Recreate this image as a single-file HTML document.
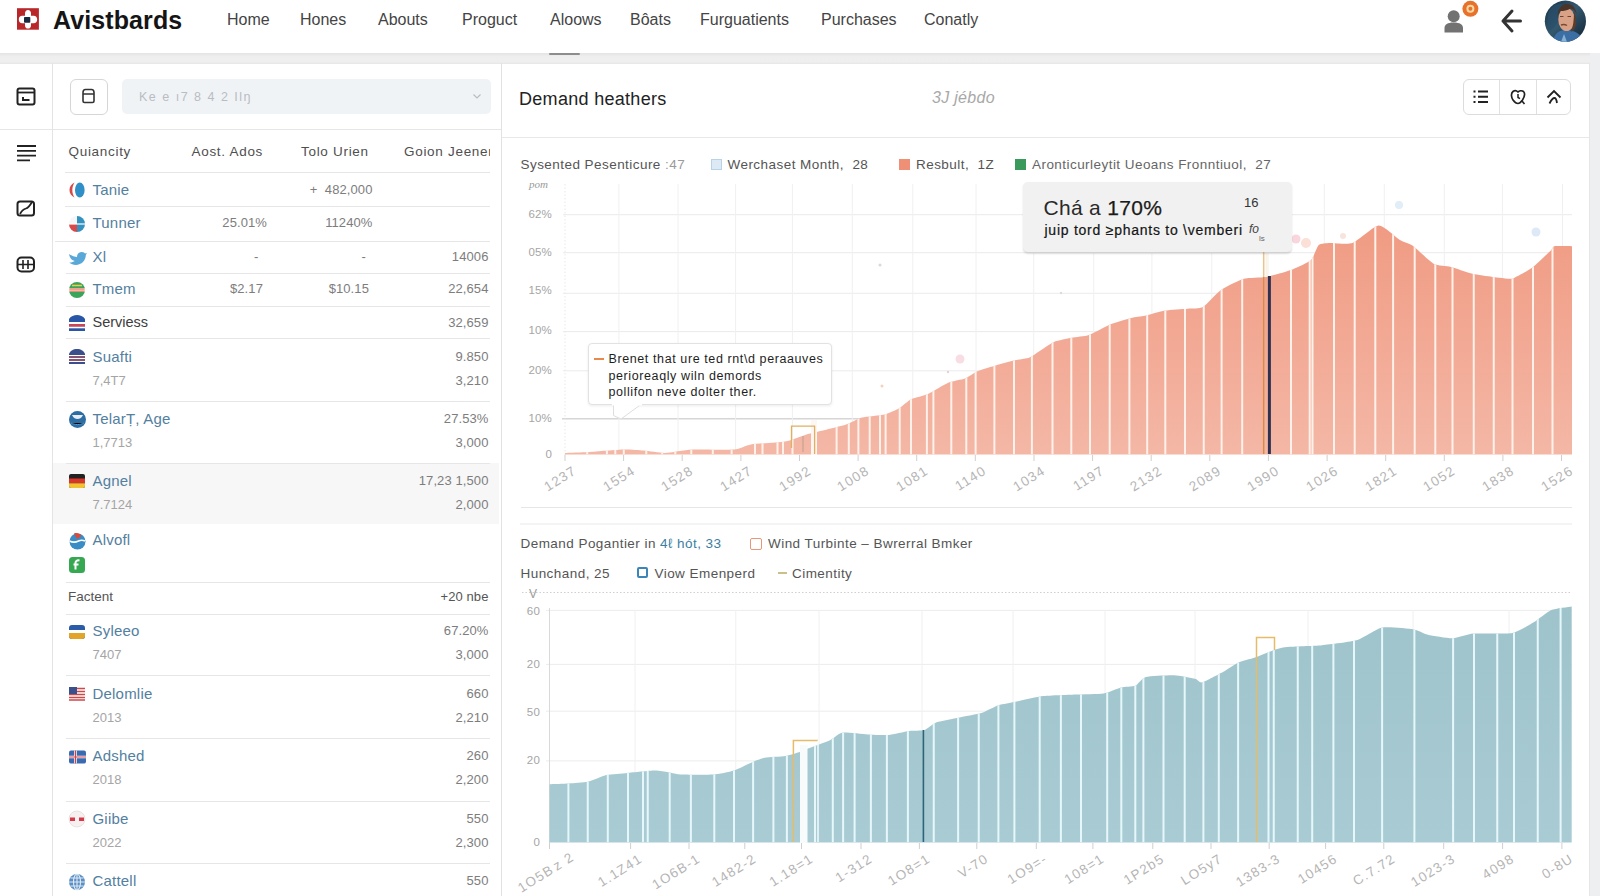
<!DOCTYPE html>
<html><head><meta charset="utf-8">
<style>
*{margin:0;padding:0;box-sizing:border-box}
div{white-space:nowrap}
html,body{width:1600px;height:896px;overflow:hidden;background:#fff;font-family:"Liberation Sans", sans-serif}
.a{position:absolute;white-space:nowrap}
.nav{position:absolute;top:10.5px;font-size:16px;color:#444;letter-spacing:0px}
.th{position:absolute;font-size:13.5px;color:#4f4f4f;letter-spacing:0.7px}
.nm{position:absolute;font-size:15px;color:#5380a0;letter-spacing:0.2px}
.nmd{position:absolute;font-size:14.5px;color:#3d3d3d}
.num{position:absolute;font-size:13px;color:#7d7d7d;text-align:right;width:90px;letter-spacing:0.1px}
.sub{position:absolute;font-size:13px;color:#a5a5a5}
.hl{position:absolute;height:1px;background:#e6e6e6}
.yl{position:absolute;font-size:11.5px;color:#a5a5a5;text-align:right;width:40px;letter-spacing:0.2px}
.xl{position:absolute;white-space:nowrap;font-size:13.5px;color:#b5b5b5;width:60px;text-align:right;transform:rotate(-32deg);transform-origin:100% 0;letter-spacing:1.2px}
.leg{position:absolute;font-size:13.5px;color:#555;letter-spacing:0.45px}
</style></head><body>
<!-- header -->
<div class="a" style="left:0;top:0;width:1600px;height:53px;background:#fff"></div>
<div class="a" style="left:0;top:53px;width:1600px;height:11px;background:linear-gradient(#e3e3e3,#eeeeee 30%,#efefef 80%,#e6e6e6)"></div>
<div class="a" style="left:549px;top:53.3px;width:31px;height:2px;background:#8d8d8d;border-radius:1px"></div>
<svg class="a" style="left:16px;top:7px" width="24" height="24" viewBox="16 7 24 24">
 <rect x="17" y="8.2" width="21.9" height="21.5" fill="#b9272b"/>
 <path d="M28 10c1.8 0 3 1.3 3 3.2v2.6h2.6c2.2 0 3.6 1.5 3.6 3.6s-1.4 3.8-3.6 3.8H31v2.2c0 1.9-1.2 3.2-3 3.2s-3-1.3-3-3.2v-2.2h-2.8c-2.1 0-3.4-1.6-3.4-3.8s1.3-3.6 3.4-3.6H25v-2.6c0-1.9 1.2-3.2 3-3.2z" fill="#fff"/>
 <rect x="24" y="17" width="6.3" height="5.8" rx="0.8" fill="#1b2a40"/>
</svg>
<div class="a" style="left:53px;top:6px;font-size:25px;font-weight:bold;color:#151515;letter-spacing:0.1px">Avistbards</div>
<div class="nav" style="left:227px">Home</div>
<div class="nav" style="left:300px">Hones</div>
<div class="nav" style="left:378px">Abouts</div>
<div class="nav" style="left:462px">Proguct</div>
<div class="nav" style="left:550px">Aloows</div>
<div class="nav" style="left:630px">Bôats</div>
<div class="nav" style="left:700px">Furguatients</div>
<div class="nav" style="left:821px">Purchases</div>
<div class="nav" style="left:924px">Conatly</div>
<svg class="a" style="left:1440px;top:0" width="40" height="36" viewBox="0 0 40 36">
 <circle cx="13.7" cy="16.3" r="6" fill="#727272"/>
 <path d="M4.5 32.6v-4.5c0-3.5 3-5.6 9.2-5.6s9.3 2.1 9.3 5.6v4.5z" fill="#727272"/>
 <circle cx="30.4" cy="8.8" r="8" fill="#e8712b"/>
 <circle cx="30.4" cy="8.8" r="3" fill="none" stroke="#f8d9a0" stroke-width="2"/>
</svg>
<svg class="a" style="left:1498px;top:8px" width="26" height="26" viewBox="0 0 26 26">
 <path d="M14 3 L5 13 L14 23 M5 13 H22.5" fill="none" stroke="#333" stroke-width="3" stroke-linecap="round" stroke-linejoin="round"/>
</svg>
<svg class="a" style="left:1540px;top:0" width="52" height="46" viewBox="1540 0 52 46">
 <defs><linearGradient id="avbg" x1="0" y1="0" x2="1" y2="1"><stop offset="0" stop-color="#162c40"/><stop offset="0.45" stop-color="#34596f"/><stop offset="1" stop-color="#0e1c2c"/></linearGradient>
 <clipPath id="avc"><circle cx="1565.4" cy="21.2" r="20.6"/></clipPath></defs>
 <g clip-path="url(#avc)">
 <rect x="1544" y="0" width="44" height="44" fill="url(#avbg)"/>
 <path d="M1548 14c2-6 6-10 12-10s4 8 0 14-8 14-12 12z" fill="#2a506c" opacity="0.7"/>
 <path d="M1552 44c2-10 6-14 14-14s16 4 20 14z" fill="#3b6fa3"/>
 <path d="M1561 42l3-8 3 8z" fill="#86b2d8"/>
 <ellipse cx="1566.5" cy="19.5" rx="8.2" ry="11.5" fill="#d9a185"/>
 <path d="M1557.5 17c0-8 4-13 9.5-13s9 4 9.5 10c-1-3-3.5-5-6-5.5-3 2-7 2.5-10 2.5-1.5 1.5-2.5 3.5-3 6z" fill="#4b3428"/>
 <path d="M1574 12c2 3 2.5 8 2 13-1 4-3 6-5 7 2-5 3-12 3-20z" fill="#5a3d2c"/>
 <path d="M1561 25c2-.8 4-.8 6 .5" stroke="#7a4a35" stroke-width="1.4" fill="none"/>
 <path d="M1560 16.5h3.5M1567.5 16.5h3.5" stroke="#6a4535" stroke-width="1"/>
 </g>
</svg>

<!-- sidebar -->
<div class="a" style="left:52px;top:63px;width:1px;height:833px;background:#e4e4e4"></div>
<div class="hl" style="left:0;top:129px;width:52px"></div>
<svg class="a" style="left:16px;top:87px" width="20" height="19" viewBox="0 0 20 19">
 <rect x="1.5" y="1.5" width="17" height="16" rx="2" fill="none" stroke="#222" stroke-width="2"/>
 <line x1="1.5" y1="5.5" x2="18.5" y2="5.5" stroke="#222" stroke-width="1.8"/>
 <path d="M7 10v3h6.5" fill="none" stroke="#222" stroke-width="2"/>
</svg>
<svg class="a" style="left:16px;top:144px" width="21" height="18" viewBox="0 0 21 18">
 <path d="M1 2h19M1 6.8h19M1 11.6h19M1 16.4h13" stroke="#222" stroke-width="1.8"/>
</svg>
<svg class="a" style="left:16px;top:200px" width="20" height="17" viewBox="0 0 20 17">
 <rect x="1.5" y="1.5" width="16.5" height="14" rx="2.5" fill="none" stroke="#222" stroke-width="2"/>
 <path d="M4 14c2-4 4-5 6-5.5s4-3 6-6.5" fill="none" stroke="#222" stroke-width="1.8"/>
</svg>
<svg class="a" style="left:16px;top:256px" width="20" height="17" viewBox="0 0 20 17">
 <rect x="1.5" y="1.5" width="16.5" height="14" rx="4" fill="none" stroke="#222" stroke-width="2"/>
 <path d="M1.5 8.5h16.5M7 4v9M12 4v9" stroke="#222" stroke-width="1.6"/>
</svg>

<!-- left panel -->
<div class="a" style="left:70px;top:78.5px;width:37.5px;height:36px;border:1px solid #d6d6d6;border-radius:6px;background:#fff"></div>
<svg class="a" style="left:80px;top:87px" width="17" height="17" viewBox="0 0 17 17">
 <path d="M3 5.5c0-2 1-3 2.5-3h6c1.5 0 2.5 1 2.5 3v8.5c0 1-.5 1.5-1.5 1.5h-8c-1 0-1.5-.5-1.5-1.5z M3 7h11" fill="none" stroke="#333" stroke-width="1.6"/>
</svg>
<div class="a" style="left:122px;top:79px;width:369px;height:35px;background:#f0f3f6;border-radius:5px"></div>
<div class="a" style="left:139px;top:90px;font-size:12.5px;color:#b9bcc2;letter-spacing:1.5px">Ke e  ı7  8  4   2 Ilŋ</div>
<svg class="a" style="left:472px;top:93px" width="10" height="7" viewBox="0 0 10 7"><path d="M1.5 1.5l3.5 3.5 3.5-3.5" fill="none" stroke="#b8bcc2" stroke-width="1.2"/></svg>
<div class="hl" style="left:53px;top:129px;width:448px"></div>

<div class="th" style="left:68.5px;top:144px">Quiancity</div>
<div class="th" style="left:191.5px;top:144px">Aost. Ados</div>
<div class="th" style="left:301px;top:144px">Tolo Urien</div>
<div class="th" style="left:404px;top:144px;width:86px;overflow:hidden">Goion Jeener</div>
<div class="hl" style="left:65px;top:172px;width:425px"></div>

<div class="a" style="left:53px;top:463px;width:446px;height:61px;background:#f7f7f7"></div>
<svg class="a" style="left:68px;top:181.0px" width="18" height="18" viewBox="0 0 18 18"><path d="M6.5 1.5C3 3 1.5 6 1.5 9s1.5 6 5 7.5C5 14 4.3 11.5 4.3 9S5 4 6.5 1.5z" fill="#d84a4a"/><ellipse cx="11.8" cy="9" rx="4.8" ry="7.6" fill="#2f8fc6"/></svg>
<div class="nm" style="left:92.5px;top:180.5px">Tanie</div>
<div class="num" style="left:282.5px;top:181.5px">+ &nbsp;482,000</div>
<svg class="a" style="left:68px;top:214.5px" width="18" height="18" viewBox="0 0 18 18"><circle cx="9" cy="9" r="8" fill="#f6f6f6"/><path d="M9 1a8 8 0 0 1 0 16z" fill="#3592bf"/><path d="M1 9a8 8 0 0 0 8 8V9z" fill="#d84848"/><path d="M1 9h16" stroke="#fff" stroke-width="1.2"/></svg>
<div class="nm" style="left:92.5px;top:214px">Tunner</div>
<div class="num" style="left:177px;top:215px">25.01%</div>
<div class="num" style="left:282.5px;top:215px">11240%</div>
<svg class="a" style="left:68px;top:248.5px" width="19" height="18" viewBox="0 0 19 18"><path d="M1 5c3 2 6 3 8 3 0-3 2-5 5-5 1.5 0 2.5.8 3 1.5l2-.5-1.2 2c.2 5-4 10-10 10-2.5 0-5-1-6.5-2.5 2 .2 4-.5 5.5-1.5C3 11 1.5 8 1 5z" fill="#5aa8d8"/></svg>
<div class="nm" style="left:92.5px;top:248px">Xl</div>
<div class="num" style="left:168.5px;top:249px">-</div>
<div class="num" style="left:276px;top:249px">-</div>
<div class="num" style="left:398.5px;top:249px">14006</div>
<svg class="a" style="left:68px;top:280.5px" width="18" height="18" viewBox="0 0 18 18"><circle cx="9" cy="9" r="8" fill="#3aa55a"/><rect x="1" y="7" width="16" height="4" fill="#f4e6c8"/><path d="M1.5 8h15M1.5 10.2h15" stroke="#d9534f" stroke-width="0.9"/><path d="M4 4.5h10" stroke="#f2c94c" stroke-width="1.5"/></svg>
<div class="nm" style="left:92.5px;top:280px">Tmem</div>
<div class="num" style="left:173px;top:281px">$2.17</div>
<div class="num" style="left:279px;top:281px">$10.15</div>
<div class="num" style="left:398.5px;top:281px">22,654</div>
<svg class="a" style="left:68px;top:314.0px" width="18" height="18" viewBox="0 0 18 18"><path d="M1 5c2-3 5-4 8-4s6 1 8 4v12H1z" fill="#2a56a8"/><rect x="1" y="8" width="16" height="2.2" fill="#fff"/><rect x="1" y="10.2" width="16" height="2.5" fill="#d8404e"/><rect x="1" y="12.7" width="16" height="1.6" fill="#fff"/></svg>
<div class="nmd" style="left:92.5px;top:313.5px">Serviess</div>
<div class="num" style="left:398.5px;top:314.5px">32,659</div>
<div class="hl" style="left:65px;top:206px;width:425px"></div>
<div class="hl" style="left:55px;top:241px;width:435px"></div>
<div class="hl" style="left:66px;top:273px;width:424px"></div>
<div class="hl" style="left:66px;top:305.5px;width:424px"></div>
<div class="hl" style="left:66px;top:338px;width:424px"></div>
<svg class="a" style="left:68px;top:348.0px" width="18" height="18" viewBox="0 0 18 18"><path d="M1 6c1-3 4-5 8-5s7 2 8 5v10H1z" fill="#3c4f8a"/><path d="M1 7.5h16M1 10.5h16M1 13.5h16" stroke="#fff" stroke-width="1.2"/><path d="M1 9h16M1 12h16" stroke="#d35a5a" stroke-width="1"/></svg>
<div class="nm" style="left:92.5px;top:347.5px">Suafti</div>
<div class="sub" style="left:92.5px;top:372.5px">7,4T7</div>
<div class="num" style="left:398.5px;top:348.5px">9.850</div>
<div class="num" style="left:398.5px;top:372.5px">3,210</div>
<svg class="a" style="left:68px;top:410.0px" width="19" height="18" viewBox="0 0 19 18"><circle cx="9.5" cy="9.5" r="8.5" fill="#2c6da3"/><path d="M4 5c1.5 3 3.5 4 5.5 4s4-1 5.5-4" fill="#e8eef4"/><path d="M3 13c2 1 4 1.5 6.5 1.5s4.5-.5 6.5-1.5" stroke="#5a9ad0" stroke-width="1"/></svg>
<div class="nm" style="left:92.5px;top:409.5px">Telar&#7788;, Age</div>
<div class="sub" style="left:92.5px;top:434.5px">1,7713</div>
<div class="num" style="left:398.5px;top:410.5px">27.53%</div>
<div class="num" style="left:398.5px;top:434.5px">3,000</div>
<svg class="a" style="left:68px;top:472.0px" width="18" height="18" viewBox="0 0 18 18"><rect x="1" y="2" width="16" height="14" rx="2" fill="#222"/><rect x="1" y="6.5" width="16" height="4.7" fill="#d8342a"/><path d="M1 11.2h16v2.8c0 1.1-.9 2-2 2H3c-1.1 0-2-.9-2-2z" fill="#f2c230"/></svg>
<div class="nm" style="left:92.5px;top:471.5px">Agnel</div>
<div class="sub" style="left:92.5px;top:496.5px">7.7124</div>
<div class="num" style="left:398.5px;top:472.5px">17,23 1,500</div>
<div class="num" style="left:398.5px;top:496.5px">2,000</div>
<svg class="a" style="left:68px;top:531.5px" width="18" height="18" viewBox="0 0 18 18"><circle cx="9.5" cy="9.5" r="8" fill="#3a8cc4"/><path d="M6 1.5c3-1 6 0 7.5 2.5L9 7z" fill="#d94a3a"/><path d="M1.5 9c3 1.5 6 1.5 9 0s4.5-1 6.5 0" stroke="#fff" stroke-width="1.6" fill="none"/></svg>
<div class="nm" style="left:92.5px;top:531px">Alvofl</div>
<svg class="a" style="left:68px;top:556.0px" width="18" height="18" viewBox="0 0 18 18"><rect x="1" y="1" width="16" height="16" rx="3.5" fill="#36a852"/><path d="M11.5 4.5c-2.5-.5-4 .5-4 2.5v6.5M5.5 8.5h5" stroke="#fff" stroke-width="2" fill="none"/></svg>
<div class="hl" style="left:66px;top:400.5px;width:424px"></div>
<div class="hl" style="left:66px;top:462.5px;width:424px"></div>
<div class="hl" style="left:66px;top:582px;width:424px"></div>
<div class="a" style="left:68px;top:589px;font-size:13.5px;color:#555">Factent</div>
<div class="num" style="left:398.5px;top:589px;color:#555">+20 nbe</div>
<div class="hl" style="left:66px;top:613.5px;width:424px"></div>
<svg class="a" style="left:68px;top:622.5px" width="18" height="18" viewBox="0 0 18 18"><rect x="1" y="2" width="16" height="14" rx="3" fill="#2a5caa"/><rect x="1" y="7" width="16" height="3" fill="#fff"/><path d="M1 10h16v3c0 1.7-1.3 3-3 3H4c-1.7 0-3-1.3-3-3z" fill="#e3a42a"/></svg>
<div class="nm" style="left:92.5px;top:622px">Syleeo</div>
<div class="sub" style="left:92.5px;top:647px">7407</div>
<div class="num" style="left:398.5px;top:623px">67.20%</div>
<div class="num" style="left:398.5px;top:647px">3,000</div>
<svg class="a" style="left:68px;top:685.0px" width="18" height="18" viewBox="0 0 18 18"><rect x="1" y="2" width="16" height="14" rx="2" fill="#fff"/><path d="M1 3.5h16M1 6.5h16M1 9.5h16M1 12.5h16M1 15h16" stroke="#d04848" stroke-width="1.4"/><rect x="1" y="2" width="8" height="7" fill="#3a4f8c"/></svg>
<div class="nm" style="left:92.5px;top:684.5px">Delomlie</div>
<div class="sub" style="left:92.5px;top:709.5px">2013</div>
<div class="num" style="left:398.5px;top:685.5px">660</div>
<div class="num" style="left:398.5px;top:709.5px">2,210</div>
<svg class="a" style="left:68px;top:747.5px" width="19" height="18" viewBox="0 0 19 18"><rect x="1" y="2.5" width="17" height="13" rx="2" fill="#3b6ab0"/><path d="M1 9h17M7.5 2.5v13" stroke="#fff" stroke-width="2.6"/><path d="M1 9h17M7.5 2.5v13" stroke="#d44040" stroke-width="1.2"/></svg>
<div class="nm" style="left:92.5px;top:747px">Adshed</div>
<div class="sub" style="left:92.5px;top:772px">2018</div>
<div class="num" style="left:398.5px;top:748px">260</div>
<div class="num" style="left:398.5px;top:772px">2,200</div>
<svg class="a" style="left:68px;top:810.0px" width="18" height="18" viewBox="0 0 18 18"><circle cx="9" cy="9" r="8" fill="#f6f0f0" stroke="#e6dada" stroke-width="0.8"/><rect x="2" y="7.5" width="5" height="3.5" fill="#d63a48"/><rect x="11" y="7.5" width="5" height="3.5" fill="#d63a48"/></svg>
<div class="nm" style="left:92.5px;top:809.5px">Giibe</div>
<div class="sub" style="left:92.5px;top:834.5px">2022</div>
<div class="num" style="left:398.5px;top:810.5px">550</div>
<div class="num" style="left:398.5px;top:834.5px">2,300</div>
<svg class="a" style="left:68px;top:872.5px" width="18" height="18" viewBox="0 0 18 18"><circle cx="9" cy="9" r="8" fill="#5b8fc4"/><path d="M1 9h16M9 1v16M2.5 5h13M2.5 13h13" stroke="#dfeaf5" stroke-width="1.1"/><ellipse cx="9" cy="9" rx="3.5" ry="8" fill="none" stroke="#dfeaf5" stroke-width="1.1"/></svg>
<div class="nm" style="left:92.5px;top:872px">Cattell</div>
<div class="num" style="left:398.5px;top:873px">550</div>
<div class="hl" style="left:66px;top:675px;width:424px"></div>
<div class="hl" style="left:66px;top:738px;width:424px"></div>
<div class="hl" style="left:66px;top:800.5px;width:424px"></div>
<div class="hl" style="left:66px;top:863px;width:424px"></div>

<!-- right panel -->
<div class="a" style="left:501px;top:63px;width:1px;height:833px;background:#e2e2e2"></div>
<div class="a" style="left:1590px;top:53px;width:10px;height:843px;background:#eeeff1"></div>
<div class="a" style="left:1589px;top:63px;width:1px;height:833px;background:#e6e6e6"></div>
<div class="a" style="left:519px;top:89px;font-size:18px;color:#222;letter-spacing:0.3px">Demand heathers</div>
<div class="a" style="left:932px;top:89px;font-size:16px;color:#a8a8a8;font-style:italic;letter-spacing:0.3px">3J jébdo</div>
<div class="a" style="left:1462.5px;top:79px;width:108.5px;height:36px;border:1px solid #dcdcdc;border-radius:6px"></div>
<div class="a" style="left:1498.5px;top:80px;width:1px;height:34px;background:#e0e0e0"></div>
<div class="a" style="left:1535.5px;top:80px;width:1px;height:34px;background:#e0e0e0"></div>
<svg class="a" style="left:1472px;top:89px" width="18" height="16" viewBox="0 0 18 16">
 <path d="M1.5 2.5h2M1.5 7.8h2M1.5 13h2M6 2.5h10M6 7.8h10M6 13h10" stroke="#222" stroke-width="2"/>
</svg>
<svg class="a" style="left:1509px;top:89px" width="18" height="16" viewBox="0 0 18 16">
 <path d="M4 2.5c2-1.5 4-.5 5 .5 1-1 3.5-2 5.5-.5 2 2 .5 6-1 8.5-1.5 2-3.5 3.5-4.5 3.5s-3.5-1.5-5-3.5C2.5 9 1.5 4.5 4 2.5z" fill="none" stroke="#222" stroke-width="1.7"/>
 <path d="M9 5v3.5l2 1.2" fill="none" stroke="#222" stroke-width="1.5"/>
 <path d="M13 12l2.5 3" stroke="#222" stroke-width="1.6"/>
</svg>
<svg class="a" style="left:1545px;top:88px" width="18" height="18" viewBox="0 0 18 18">
 <path d="M2.5 9.5l6.5-6.5 6.5 6.5" fill="none" stroke="#222" stroke-width="1.8"/>
 <path d="M4.5 15.5c1.5-3 3-5.5 5-5.5 1.5 0 2 1.5 2.5 5" fill="none" stroke="#222" stroke-width="1.8"/>
</svg>
<div class="hl" style="left:502px;top:137px;width:1087px;background:#e8e8e8"></div>

<svg width="1600" height="896" style="position:absolute;left:0;top:0">
<defs><linearGradient id="g1" x1="0" y1="0" x2="0" y2="1"><stop offset="0" stop-color="#f09b83"/><stop offset="1" stop-color="#f4b7a6"/></linearGradient><linearGradient id="g2" x1="0" y1="0" x2="0" y2="1"><stop offset="0" stop-color="#9fc3ca"/><stop offset="1" stop-color="#a9ccd4"/></linearGradient></defs>
<line x1="563" y1="214.7" x2="1572" y2="214.7" stroke="#ebebeb" stroke-width="1"/>
<line x1="563" y1="252.7" x2="1572" y2="252.7" stroke="#ebebeb" stroke-width="1"/>
<line x1="563" y1="293.3" x2="1572" y2="293.3" stroke="#ebebeb" stroke-width="1"/>
<line x1="563" y1="331.6" x2="1572" y2="331.6" stroke="#ebebeb" stroke-width="1"/>
<line x1="563" y1="370.8" x2="1572" y2="370.8" stroke="#ebebeb" stroke-width="1"/>
<line x1="562" y1="418.7" x2="1572" y2="418.7" stroke="#d6d6d6" stroke-width="1.4"/>
<line x1="618.9" y1="184" x2="618.9" y2="454" stroke="#f0f0f0" stroke-width="1"/>
<line x1="678.0" y1="184" x2="678.0" y2="454" stroke="#f0f0f0" stroke-width="1"/>
<line x1="735.6" y1="184" x2="735.6" y2="454" stroke="#f0f0f0" stroke-width="1"/>
<line x1="792.4" y1="184" x2="792.4" y2="454" stroke="#f0f0f0" stroke-width="1"/>
<line x1="852.3" y1="184" x2="852.3" y2="454" stroke="#f0f0f0" stroke-width="1"/>
<line x1="912.8" y1="184" x2="912.8" y2="454" stroke="#f0f0f0" stroke-width="1"/>
<line x1="976.0" y1="184" x2="976.0" y2="454" stroke="#f0f0f0" stroke-width="1"/>
<line x1="1033.7" y1="184" x2="1033.7" y2="454" stroke="#f0f0f0" stroke-width="1"/>
<line x1="1093.7" y1="184" x2="1093.7" y2="454" stroke="#f0f0f0" stroke-width="1"/>
<line x1="1151.9" y1="184" x2="1151.9" y2="454" stroke="#f0f0f0" stroke-width="1"/>
<line x1="1211.8" y1="184" x2="1211.8" y2="454" stroke="#f0f0f0" stroke-width="1"/>
<line x1="1268.0" y1="184" x2="1268.0" y2="454" stroke="#f0f0f0" stroke-width="1"/>
<line x1="1324.3" y1="184" x2="1324.3" y2="454" stroke="#f0f0f0" stroke-width="1"/>
<line x1="1384.3" y1="184" x2="1384.3" y2="454" stroke="#f0f0f0" stroke-width="1"/>
<line x1="1444.3" y1="184" x2="1444.3" y2="454" stroke="#f0f0f0" stroke-width="1"/>
<line x1="1502.4" y1="184" x2="1502.4" y2="454" stroke="#f0f0f0" stroke-width="1"/>
<line x1="1562.5" y1="184" x2="1562.5" y2="454" stroke="#f0f0f0" stroke-width="1"/>
<line x1="565" y1="184" x2="565" y2="455" stroke="#e8e8e8" stroke-width="1" stroke-dasharray="1.5,2"/>
<clipPath id="cp1"><path d="M565.0,454.5 L565.0,453.0 C567.4,452.9 583.1,452.4 589.0,452.0 C594.9,451.6 618.5,449.6 624.0,449.5 C629.5,449.4 639.9,450.2 644.0,450.6 C648.1,451.0 660.2,453.1 665.0,453.0 C669.8,452.9 685.1,449.9 692.0,449.5 C698.9,449.1 728.1,450.0 734.0,449.5 C739.9,449.0 745.9,445.2 751.0,444.4 C756.1,443.6 779.3,442.6 785.0,441.6 C790.7,440.6 804.8,435.0 808.0,434.0 C811.2,433.0 812.9,432.9 816.6,432.0 C820.4,431.1 841.0,426.2 845.5,424.8 C850.0,423.4 858.1,418.6 862.0,417.6 C865.9,416.6 881.0,415.4 884.7,414.5 C888.4,413.6 896.3,409.9 899.0,408.3 C901.7,406.8 908.6,400.4 911.5,399.0 C914.4,397.6 924.3,395.5 928.0,393.9 C931.7,392.2 944.9,384.1 948.6,382.5 C952.3,380.9 962.1,379.5 965.0,378.4 C967.9,377.3 974.6,372.4 977.5,371.2 C980.4,370.0 990.5,367.0 994.0,366.0 C997.5,365.0 1009.1,361.6 1012.6,360.8 C1016.1,360.0 1026.5,358.6 1029.0,357.8 C1031.5,357.0 1034.8,354.2 1037.3,352.6 C1039.8,351.0 1050.6,343.5 1054.0,342.0 C1057.4,340.5 1068.0,338.5 1071.5,337.8 C1075.0,337.1 1085.2,336.3 1089.0,335.0 C1092.8,333.7 1105.8,326.2 1110.0,324.5 C1114.2,322.8 1127.5,318.9 1131.0,318.0 C1134.5,317.1 1141.6,316.5 1145.0,315.8 C1148.4,315.0 1160.8,311.3 1165.0,310.6 C1169.2,309.9 1183.7,309.1 1187.5,308.7 C1191.3,308.3 1199.7,308.9 1203.0,307.0 C1206.3,305.1 1216.9,292.8 1221.0,290.0 C1225.1,287.2 1239.2,280.0 1243.7,278.7 C1248.2,277.4 1261.1,277.8 1266.0,276.9 C1270.9,276.0 1288.0,271.1 1292.5,269.4 C1297.0,267.7 1308.4,262.4 1311.0,260.0 C1313.6,257.6 1316.8,246.7 1318.7,245.0 C1320.6,243.3 1326.6,243.2 1330.0,243.0 C1333.4,242.8 1347.6,244.8 1352.5,243.0 C1357.4,241.2 1374.0,225.8 1378.7,225.5 C1383.5,225.2 1396.6,238.0 1400.0,240.0 C1403.4,242.0 1409.1,243.2 1412.5,245.6 C1415.9,248.0 1429.9,261.6 1433.8,263.8 C1437.6,265.9 1447.1,265.9 1451.0,266.9 C1454.9,267.9 1468.3,272.8 1472.5,273.8 C1476.7,274.8 1488.7,276.4 1492.5,276.9 C1496.3,277.4 1508.8,278.7 1511.0,278.8 C1513.2,278.8 1512.8,278.6 1515.0,277.5 C1517.2,276.4 1528.9,270.2 1532.5,267.5 C1536.1,264.8 1549.1,252.1 1551.2,250.0 C1553.4,247.9 1552.3,246.6 1554.4,246.2 C1556.5,245.9 1570.2,246.2 1572.0,246.2 L1572.0,454.5 Z"/></clipPath>
<path d="M565.0,454.5 L565.0,453.0 C567.4,452.9 583.1,452.4 589.0,452.0 C594.9,451.6 618.5,449.6 624.0,449.5 C629.5,449.4 639.9,450.2 644.0,450.6 C648.1,451.0 660.2,453.1 665.0,453.0 C669.8,452.9 685.1,449.9 692.0,449.5 C698.9,449.1 728.1,450.0 734.0,449.5 C739.9,449.0 745.9,445.2 751.0,444.4 C756.1,443.6 779.3,442.6 785.0,441.6 C790.7,440.6 804.8,435.0 808.0,434.0 C811.2,433.0 812.9,432.9 816.6,432.0 C820.4,431.1 841.0,426.2 845.5,424.8 C850.0,423.4 858.1,418.6 862.0,417.6 C865.9,416.6 881.0,415.4 884.7,414.5 C888.4,413.6 896.3,409.9 899.0,408.3 C901.7,406.8 908.6,400.4 911.5,399.0 C914.4,397.6 924.3,395.5 928.0,393.9 C931.7,392.2 944.9,384.1 948.6,382.5 C952.3,380.9 962.1,379.5 965.0,378.4 C967.9,377.3 974.6,372.4 977.5,371.2 C980.4,370.0 990.5,367.0 994.0,366.0 C997.5,365.0 1009.1,361.6 1012.6,360.8 C1016.1,360.0 1026.5,358.6 1029.0,357.8 C1031.5,357.0 1034.8,354.2 1037.3,352.6 C1039.8,351.0 1050.6,343.5 1054.0,342.0 C1057.4,340.5 1068.0,338.5 1071.5,337.8 C1075.0,337.1 1085.2,336.3 1089.0,335.0 C1092.8,333.7 1105.8,326.2 1110.0,324.5 C1114.2,322.8 1127.5,318.9 1131.0,318.0 C1134.5,317.1 1141.6,316.5 1145.0,315.8 C1148.4,315.0 1160.8,311.3 1165.0,310.6 C1169.2,309.9 1183.7,309.1 1187.5,308.7 C1191.3,308.3 1199.7,308.9 1203.0,307.0 C1206.3,305.1 1216.9,292.8 1221.0,290.0 C1225.1,287.2 1239.2,280.0 1243.7,278.7 C1248.2,277.4 1261.1,277.8 1266.0,276.9 C1270.9,276.0 1288.0,271.1 1292.5,269.4 C1297.0,267.7 1308.4,262.4 1311.0,260.0 C1313.6,257.6 1316.8,246.7 1318.7,245.0 C1320.6,243.3 1326.6,243.2 1330.0,243.0 C1333.4,242.8 1347.6,244.8 1352.5,243.0 C1357.4,241.2 1374.0,225.8 1378.7,225.5 C1383.5,225.2 1396.6,238.0 1400.0,240.0 C1403.4,242.0 1409.1,243.2 1412.5,245.6 C1415.9,248.0 1429.9,261.6 1433.8,263.8 C1437.6,265.9 1447.1,265.9 1451.0,266.9 C1454.9,267.9 1468.3,272.8 1472.5,273.8 C1476.7,274.8 1488.7,276.4 1492.5,276.9 C1496.3,277.4 1508.8,278.7 1511.0,278.8 C1513.2,278.8 1512.8,278.6 1515.0,277.5 C1517.2,276.4 1528.9,270.2 1532.5,267.5 C1536.1,264.8 1549.1,252.1 1551.2,250.0 C1553.4,247.9 1552.3,246.6 1554.4,246.2 C1556.5,245.9 1570.2,246.2 1572.0,246.2 L1572.0,454.5 Z" fill="url(#g1)"/>
<g clip-path="url(#cp1)">
<line x1="587.2" y1="200" x2="587.2" y2="454.5" stroke="#fdf1ea" stroke-width="2"/>
<line x1="606.9" y1="200" x2="606.9" y2="454.5" stroke="#fdf1ea" stroke-width="2"/>
<line x1="615.3" y1="200" x2="615.3" y2="454.5" stroke="#fdf1ea" stroke-width="2"/>
<line x1="623.8" y1="200" x2="623.8" y2="454.5" stroke="#fdf1ea" stroke-width="2"/>
<line x1="646.3" y1="200" x2="646.3" y2="454.5" stroke="#fdf1ea" stroke-width="2"/>
<line x1="662.2" y1="200" x2="662.2" y2="454.5" stroke="#fdf1ea" stroke-width="2"/>
<line x1="675.3" y1="200" x2="675.3" y2="454.5" stroke="#fdf1ea" stroke-width="2"/>
<line x1="691.3" y1="200" x2="691.3" y2="454.5" stroke="#fdf1ea" stroke-width="2"/>
<line x1="712.8" y1="200" x2="712.8" y2="454.5" stroke="#fdf1ea" stroke-width="2"/>
<line x1="731.6" y1="200" x2="731.6" y2="454.5" stroke="#fdf1ea" stroke-width="2"/>
<line x1="755" y1="200" x2="755" y2="454.5" stroke="#fdf1ea" stroke-width="2"/>
<line x1="762.5" y1="200" x2="762.5" y2="454.5" stroke="#fdf1ea" stroke-width="2"/>
<line x1="777.5" y1="200" x2="777.5" y2="454.5" stroke="#fdf1ea" stroke-width="2"/>
<line x1="783" y1="200" x2="783" y2="454.5" stroke="#fdf1ea" stroke-width="2"/>
<line x1="792.5" y1="200" x2="792.5" y2="454.5" stroke="#fdf1ea" stroke-width="2"/>
<line x1="836.6" y1="200" x2="836.6" y2="454.5" stroke="#fdf1ea" stroke-width="2"/>
<line x1="848.8" y1="200" x2="848.8" y2="454.5" stroke="#fdf1ea" stroke-width="2"/>
<line x1="858.4" y1="200" x2="858.4" y2="454.5" stroke="#fdf1ea" stroke-width="2"/>
<line x1="869.7" y1="200" x2="869.7" y2="454.5" stroke="#fdf1ea" stroke-width="2"/>
<line x1="880" y1="200" x2="880" y2="454.5" stroke="#fdf1ea" stroke-width="2"/>
<line x1="885.6" y1="200" x2="885.6" y2="454.5" stroke="#fdf1ea" stroke-width="2"/>
<line x1="899.7" y1="200" x2="899.7" y2="454.5" stroke="#fdf1ea" stroke-width="2"/>
<line x1="911" y1="200" x2="911" y2="454.5" stroke="#fdf1ea" stroke-width="2"/>
<line x1="926.9" y1="200" x2="926.9" y2="454.5" stroke="#fdf1ea" stroke-width="2"/>
<line x1="933.4" y1="200" x2="933.4" y2="454.5" stroke="#fdf1ea" stroke-width="2"/>
<line x1="951.3" y1="200" x2="951.3" y2="454.5" stroke="#fdf1ea" stroke-width="2"/>
<line x1="966.3" y1="200" x2="966.3" y2="454.5" stroke="#fdf1ea" stroke-width="2"/>
<line x1="975.6" y1="200" x2="975.6" y2="454.5" stroke="#fdf1ea" stroke-width="2"/>
<line x1="994.4" y1="200" x2="994.4" y2="454.5" stroke="#fdf1ea" stroke-width="2"/>
<line x1="1014" y1="200" x2="1014" y2="454.5" stroke="#fdf1ea" stroke-width="2"/>
<line x1="1031.9" y1="200" x2="1031.9" y2="454.5" stroke="#fdf1ea" stroke-width="2"/>
<line x1="1052.5" y1="200" x2="1052.5" y2="454.5" stroke="#fdf1ea" stroke-width="2"/>
<line x1="1071.3" y1="200" x2="1071.3" y2="454.5" stroke="#fdf1ea" stroke-width="2"/>
<line x1="1090" y1="200" x2="1090" y2="454.5" stroke="#fdf1ea" stroke-width="2"/>
<line x1="1109.7" y1="200" x2="1109.7" y2="454.5" stroke="#fdf1ea" stroke-width="2"/>
<line x1="1129.4" y1="200" x2="1129.4" y2="454.5" stroke="#fdf1ea" stroke-width="2"/>
<line x1="1147.2" y1="200" x2="1147.2" y2="454.5" stroke="#fdf1ea" stroke-width="2"/>
<line x1="1165.3" y1="200" x2="1165.3" y2="454.5" stroke="#fdf1ea" stroke-width="2"/>
<line x1="1185" y1="200" x2="1185" y2="454.5" stroke="#fdf1ea" stroke-width="2"/>
<line x1="1203.75" y1="200" x2="1203.75" y2="454.5" stroke="#fdf1ea" stroke-width="2"/>
<line x1="1221.6" y1="200" x2="1221.6" y2="454.5" stroke="#fdf1ea" stroke-width="2"/>
<line x1="1242.2" y1="200" x2="1242.2" y2="454.5" stroke="#fdf1ea" stroke-width="2"/>
<line x1="1291" y1="200" x2="1291" y2="454.5" stroke="#fdf1ea" stroke-width="2"/>
<line x1="1309.7" y1="200" x2="1309.7" y2="454.5" stroke="#fdf1ea" stroke-width="2"/>
<line x1="1312.5" y1="200" x2="1312.5" y2="454.5" stroke="#fdf1ea" stroke-width="2"/>
<line x1="1334" y1="200" x2="1334" y2="454.5" stroke="#fdf1ea" stroke-width="2"/>
<line x1="1354.7" y1="200" x2="1354.7" y2="454.5" stroke="#fdf1ea" stroke-width="2"/>
<line x1="1375.3" y1="200" x2="1375.3" y2="454.5" stroke="#fdf1ea" stroke-width="2"/>
<line x1="1393.1" y1="200" x2="1393.1" y2="454.5" stroke="#fdf1ea" stroke-width="2"/>
<line x1="1414.7" y1="200" x2="1414.7" y2="454.5" stroke="#fdf1ea" stroke-width="2"/>
<line x1="1435.3" y1="200" x2="1435.3" y2="454.5" stroke="#fdf1ea" stroke-width="2"/>
<line x1="1452.5" y1="200" x2="1452.5" y2="454.5" stroke="#fdf1ea" stroke-width="2"/>
<line x1="1473.75" y1="200" x2="1473.75" y2="454.5" stroke="#fdf1ea" stroke-width="2"/>
<line x1="1493.75" y1="200" x2="1493.75" y2="454.5" stroke="#fdf1ea" stroke-width="2"/>
<line x1="1512.5" y1="200" x2="1512.5" y2="454.5" stroke="#fdf1ea" stroke-width="2"/>
<line x1="1533" y1="200" x2="1533" y2="454.5" stroke="#fdf1ea" stroke-width="2"/>
<line x1="1552.5" y1="200" x2="1552.5" y2="454.5" stroke="#fdf1ea" stroke-width="2"/>
</g>
<rect x="811" y="420" width="6" height="35" fill="#fdf6f2"/>
<polyline points="791.5,448 791.5,426.2 814.6,426.2 814.6,454" fill="none" stroke="#e0b060" stroke-width="1.3"/><line x1="803" y1="436" x2="803" y2="452" stroke="#b9a08a" stroke-width="1"/>
<line x1="1263.7" y1="252" x2="1263.7" y2="454" stroke="#e8c48e" stroke-width="1.5"/><line x1="1263.7" y1="277" x2="1263.7" y2="454" stroke="#d98a4a" stroke-width="1.5"/><line x1="1266.5" y1="253" x2="1266.5" y2="277" stroke="#fbf3e2" stroke-width="2"/>
<line x1="1269.4" y1="276" x2="1269.4" y2="454" stroke="#2f3150" stroke-width="3"/>
<line x1="565.0" y1="455" x2="565.0" y2="461" stroke="#cfcfcf" stroke-width="1"/>
<line x1="623.6" y1="455" x2="623.6" y2="461" stroke="#cfcfcf" stroke-width="1"/>
<line x1="682.2" y1="455" x2="682.2" y2="461" stroke="#cfcfcf" stroke-width="1"/>
<line x1="740.9" y1="455" x2="740.9" y2="461" stroke="#cfcfcf" stroke-width="1"/>
<line x1="799.5" y1="455" x2="799.5" y2="461" stroke="#cfcfcf" stroke-width="1"/>
<line x1="858.1" y1="455" x2="858.1" y2="461" stroke="#cfcfcf" stroke-width="1"/>
<line x1="916.7" y1="455" x2="916.7" y2="461" stroke="#cfcfcf" stroke-width="1"/>
<line x1="975.3" y1="455" x2="975.3" y2="461" stroke="#cfcfcf" stroke-width="1"/>
<line x1="1034.0" y1="455" x2="1034.0" y2="461" stroke="#cfcfcf" stroke-width="1"/>
<line x1="1092.6" y1="455" x2="1092.6" y2="461" stroke="#cfcfcf" stroke-width="1"/>
<line x1="1151.2" y1="455" x2="1151.2" y2="461" stroke="#cfcfcf" stroke-width="1"/>
<line x1="1209.8" y1="455" x2="1209.8" y2="461" stroke="#cfcfcf" stroke-width="1"/>
<line x1="1268.4" y1="455" x2="1268.4" y2="461" stroke="#cfcfcf" stroke-width="1"/>
<line x1="1327.1" y1="455" x2="1327.1" y2="461" stroke="#cfcfcf" stroke-width="1"/>
<line x1="1385.7" y1="455" x2="1385.7" y2="461" stroke="#cfcfcf" stroke-width="1"/>
<line x1="1444.3" y1="455" x2="1444.3" y2="461" stroke="#cfcfcf" stroke-width="1"/>
<line x1="1502.9" y1="455" x2="1502.9" y2="461" stroke="#cfcfcf" stroke-width="1"/>
<line x1="1561.5" y1="455" x2="1561.5" y2="461" stroke="#cfcfcf" stroke-width="1"/>
<line x1="521" y1="507.5" x2="1572" y2="507.5" stroke="#e6e6e6" stroke-width="1.2"/>
<line x1="520" y1="524" x2="1572" y2="524" stroke="#e9e9e9" stroke-width="1.2"/>
<line x1="522" y1="592.5" x2="1572" y2="592.5" stroke="#cfcfcf" stroke-width="1" stroke-dasharray="1.5,2"/>
<line x1="546" y1="610.4" x2="1572" y2="610.4" stroke="#ececec" stroke-width="1"/>
<line x1="546" y1="664.4" x2="1572" y2="664.4" stroke="#ececec" stroke-width="1"/>
<line x1="546" y1="711.2" x2="1572" y2="711.2" stroke="#ececec" stroke-width="1"/>
<line x1="546" y1="760.9" x2="1572" y2="760.9" stroke="#ececec" stroke-width="1"/>
<line x1="635" y1="610" x2="635" y2="842" stroke="#f0f0f0" stroke-width="1"/>
<line x1="735.8" y1="610" x2="735.8" y2="842" stroke="#f0f0f0" stroke-width="1"/>
<line x1="819" y1="610" x2="819" y2="842" stroke="#f0f0f0" stroke-width="1"/>
<line x1="922" y1="610" x2="922" y2="842" stroke="#f0f0f0" stroke-width="1"/>
<line x1="1013" y1="610" x2="1013" y2="842" stroke="#f0f0f0" stroke-width="1"/>
<line x1="1105" y1="610" x2="1105" y2="842" stroke="#f0f0f0" stroke-width="1"/>
<line x1="1195" y1="610" x2="1195" y2="842" stroke="#f0f0f0" stroke-width="1"/>
<line x1="1308" y1="610" x2="1308" y2="842" stroke="#f0f0f0" stroke-width="1"/>
<line x1="1413" y1="610" x2="1413" y2="842" stroke="#f0f0f0" stroke-width="1"/>
<line x1="1509" y1="610" x2="1509" y2="842" stroke="#f0f0f0" stroke-width="1"/>
<line x1="549.5" y1="608" x2="549.5" y2="843" stroke="#d9d9d9" stroke-width="1"/>
<clipPath id="cp2"><path d="M549.5,842.6 L549.5,784.2 C551.4,784.1 564.9,783.7 568.8,783.5 C572.6,783.3 583.9,782.6 587.7,781.8 C591.5,780.9 602.6,775.9 606.6,775.0 C610.6,774.1 622.4,773.4 627.2,772.9 C632.0,772.4 650.6,770.6 654.7,770.5 C658.8,770.4 665.6,771.8 668.4,772.2 C671.1,772.6 677.7,774.4 682.2,774.6 C686.7,774.8 707.8,775.0 713.0,774.6 C718.2,774.2 729.7,771.8 733.8,770.5 C737.9,769.2 751.3,762.5 754.4,761.2 C757.5,759.9 761.6,758.3 764.7,757.8 C767.8,757.2 781.9,756.5 785.3,756.0 C788.7,755.5 796.6,753.0 799.0,752.2 C801.4,751.5 806.3,749.2 809.4,748.0 C812.5,746.8 826.7,741.7 830.0,740.2 C833.3,738.7 838.2,733.3 842.0,732.7 C845.8,732.1 863.2,734.2 867.8,734.4 C872.4,734.6 884.3,735.3 888.4,735.0 C892.5,734.7 905.4,731.5 909.0,731.0 C912.6,730.5 921.7,730.9 924.5,730.0 C927.3,729.1 933.0,723.6 936.6,722.3 C940.2,721.0 956.1,718.1 960.6,717.2 C965.1,716.3 977.5,714.2 981.3,713.0 C985.1,711.8 995.1,706.3 998.5,705.2 C1001.9,704.1 1011.5,702.6 1015.6,701.7 C1019.8,700.8 1034.0,697.1 1040.0,696.4 C1046.0,695.7 1069.0,694.9 1075.3,694.6 C1081.6,694.3 1098.9,694.2 1103.5,693.5 C1108.1,692.8 1117.8,688.3 1121.0,687.5 C1124.2,686.7 1132.7,686.8 1135.2,685.8 C1137.7,684.8 1141.9,678.1 1145.8,677.0 C1149.7,675.9 1169.1,675.0 1174.0,675.2 C1178.9,675.4 1192.2,678.0 1195.0,678.7 C1197.8,679.4 1199.4,683.0 1202.2,682.3 C1205.0,681.6 1219.9,673.6 1223.4,671.7 C1226.9,669.8 1234.3,664.3 1237.5,662.9 C1240.7,661.5 1251.5,658.8 1255.0,657.6 C1258.5,656.4 1269.5,651.6 1272.7,650.5 C1275.9,649.4 1281.9,647.5 1286.8,647.0 C1291.7,646.5 1314.9,645.9 1322.0,645.2 C1329.1,644.5 1351.4,641.8 1357.4,640.0 C1363.4,638.2 1376.4,628.7 1382.0,627.6 C1387.6,626.5 1409.2,628.7 1413.8,629.4 C1418.4,630.1 1424.0,633.8 1427.9,634.7 C1431.8,635.6 1447.9,638.3 1452.5,638.2 C1457.1,638.1 1467.7,634.1 1473.7,633.6 C1479.7,633.1 1506.5,634.0 1512.5,632.9 C1518.5,631.8 1529.8,624.6 1533.7,622.3 C1537.6,620.0 1547.5,611.6 1551.3,610.0 C1555.1,608.4 1569.7,606.8 1571.7,606.4 L1571.7,842.6 Z"/></clipPath>
<path d="M549.5,842.6 L549.5,784.2 C551.4,784.1 564.9,783.7 568.8,783.5 C572.6,783.3 583.9,782.6 587.7,781.8 C591.5,780.9 602.6,775.9 606.6,775.0 C610.6,774.1 622.4,773.4 627.2,772.9 C632.0,772.4 650.6,770.6 654.7,770.5 C658.8,770.4 665.6,771.8 668.4,772.2 C671.1,772.6 677.7,774.4 682.2,774.6 C686.7,774.8 707.8,775.0 713.0,774.6 C718.2,774.2 729.7,771.8 733.8,770.5 C737.9,769.2 751.3,762.5 754.4,761.2 C757.5,759.9 761.6,758.3 764.7,757.8 C767.8,757.2 781.9,756.5 785.3,756.0 C788.7,755.5 796.6,753.0 799.0,752.2 C801.4,751.5 806.3,749.2 809.4,748.0 C812.5,746.8 826.7,741.7 830.0,740.2 C833.3,738.7 838.2,733.3 842.0,732.7 C845.8,732.1 863.2,734.2 867.8,734.4 C872.4,734.6 884.3,735.3 888.4,735.0 C892.5,734.7 905.4,731.5 909.0,731.0 C912.6,730.5 921.7,730.9 924.5,730.0 C927.3,729.1 933.0,723.6 936.6,722.3 C940.2,721.0 956.1,718.1 960.6,717.2 C965.1,716.3 977.5,714.2 981.3,713.0 C985.1,711.8 995.1,706.3 998.5,705.2 C1001.9,704.1 1011.5,702.6 1015.6,701.7 C1019.8,700.8 1034.0,697.1 1040.0,696.4 C1046.0,695.7 1069.0,694.9 1075.3,694.6 C1081.6,694.3 1098.9,694.2 1103.5,693.5 C1108.1,692.8 1117.8,688.3 1121.0,687.5 C1124.2,686.7 1132.7,686.8 1135.2,685.8 C1137.7,684.8 1141.9,678.1 1145.8,677.0 C1149.7,675.9 1169.1,675.0 1174.0,675.2 C1178.9,675.4 1192.2,678.0 1195.0,678.7 C1197.8,679.4 1199.4,683.0 1202.2,682.3 C1205.0,681.6 1219.9,673.6 1223.4,671.7 C1226.9,669.8 1234.3,664.3 1237.5,662.9 C1240.7,661.5 1251.5,658.8 1255.0,657.6 C1258.5,656.4 1269.5,651.6 1272.7,650.5 C1275.9,649.4 1281.9,647.5 1286.8,647.0 C1291.7,646.5 1314.9,645.9 1322.0,645.2 C1329.1,644.5 1351.4,641.8 1357.4,640.0 C1363.4,638.2 1376.4,628.7 1382.0,627.6 C1387.6,626.5 1409.2,628.7 1413.8,629.4 C1418.4,630.1 1424.0,633.8 1427.9,634.7 C1431.8,635.6 1447.9,638.3 1452.5,638.2 C1457.1,638.1 1467.7,634.1 1473.7,633.6 C1479.7,633.1 1506.5,634.0 1512.5,632.9 C1518.5,631.8 1529.8,624.6 1533.7,622.3 C1537.6,620.0 1547.5,611.6 1551.3,610.0 C1555.1,608.4 1569.7,606.8 1571.7,606.4 L1571.7,842.6 Z" fill="url(#g2)"/>
<g clip-path="url(#cp2)">
<line x1="568.4" y1="590" x2="568.4" y2="842.6" stroke="#e6f7fb" stroke-width="2"/>
<line x1="587.75" y1="590" x2="587.75" y2="842.6" stroke="#e6f7fb" stroke-width="2"/>
<line x1="607.8" y1="590" x2="607.8" y2="842.6" stroke="#e6f7fb" stroke-width="2"/>
<line x1="628" y1="590" x2="628" y2="842.6" stroke="#e6f7fb" stroke-width="2"/>
<line x1="643" y1="590" x2="643" y2="842.6" stroke="#e6f7fb" stroke-width="2"/>
<line x1="647.75" y1="590" x2="647.75" y2="842.6" stroke="#e6f7fb" stroke-width="2"/>
<line x1="669.7" y1="590" x2="669.7" y2="842.6" stroke="#e6f7fb" stroke-width="2"/>
<line x1="690.9" y1="590" x2="690.9" y2="842.6" stroke="#e6f7fb" stroke-width="2"/>
<line x1="714.3" y1="590" x2="714.3" y2="842.6" stroke="#e6f7fb" stroke-width="2"/>
<line x1="734" y1="590" x2="734" y2="842.6" stroke="#e6f7fb" stroke-width="2"/>
<line x1="753.1" y1="590" x2="753.1" y2="842.6" stroke="#e6f7fb" stroke-width="2"/>
<line x1="773.4" y1="590" x2="773.4" y2="842.6" stroke="#e6f7fb" stroke-width="2"/>
<line x1="786.9" y1="590" x2="786.9" y2="842.6" stroke="#e6f7fb" stroke-width="2"/>
<line x1="815" y1="590" x2="815" y2="842.6" stroke="#e6f7fb" stroke-width="2"/>
<line x1="832.8" y1="590" x2="832.8" y2="842.6" stroke="#e6f7fb" stroke-width="2"/>
<line x1="843.1" y1="590" x2="843.1" y2="842.6" stroke="#e6f7fb" stroke-width="2"/>
<line x1="854.6" y1="590" x2="854.6" y2="842.6" stroke="#e6f7fb" stroke-width="2"/>
<line x1="870.9" y1="590" x2="870.9" y2="842.6" stroke="#e6f7fb" stroke-width="2"/>
<line x1="886.9" y1="590" x2="886.9" y2="842.6" stroke="#e6f7fb" stroke-width="2"/>
<line x1="907.9" y1="590" x2="907.9" y2="842.6" stroke="#e6f7fb" stroke-width="2"/>
<line x1="933.75" y1="590" x2="933.75" y2="842.6" stroke="#e6f7fb" stroke-width="2"/>
<line x1="958.1" y1="590" x2="958.1" y2="842.6" stroke="#e6f7fb" stroke-width="2"/>
<line x1="978.75" y1="590" x2="978.75" y2="842.6" stroke="#e6f7fb" stroke-width="2"/>
<line x1="998.4" y1="590" x2="998.4" y2="842.6" stroke="#e6f7fb" stroke-width="2"/>
<line x1="1014.4" y1="590" x2="1014.4" y2="842.6" stroke="#e6f7fb" stroke-width="2"/>
<line x1="1039.7" y1="590" x2="1039.7" y2="842.6" stroke="#e6f7fb" stroke-width="2"/>
<line x1="1060.9" y1="590" x2="1060.9" y2="842.6" stroke="#e6f7fb" stroke-width="2"/>
<line x1="1081" y1="590" x2="1081" y2="842.6" stroke="#e6f7fb" stroke-width="2"/>
<line x1="1107.2" y1="590" x2="1107.2" y2="842.6" stroke="#e6f7fb" stroke-width="2"/>
<line x1="1121.3" y1="590" x2="1121.3" y2="842.6" stroke="#e6f7fb" stroke-width="2"/>
<line x1="1135.3" y1="590" x2="1135.3" y2="842.6" stroke="#e6f7fb" stroke-width="2"/>
<line x1="1143.4" y1="590" x2="1143.4" y2="842.6" stroke="#e6f7fb" stroke-width="2"/>
<line x1="1163.5" y1="590" x2="1163.5" y2="842.6" stroke="#e6f7fb" stroke-width="2"/>
<line x1="1184.7" y1="590" x2="1184.7" y2="842.6" stroke="#e6f7fb" stroke-width="2"/>
<line x1="1203.4" y1="590" x2="1203.4" y2="842.6" stroke="#e6f7fb" stroke-width="2"/>
<line x1="1218.8" y1="590" x2="1218.8" y2="842.6" stroke="#e6f7fb" stroke-width="2"/>
<line x1="1238.1" y1="590" x2="1238.1" y2="842.6" stroke="#e6f7fb" stroke-width="2"/>
<line x1="1268.5" y1="590" x2="1268.5" y2="842.6" stroke="#e6f7fb" stroke-width="2"/>
<line x1="1273.75" y1="590" x2="1273.75" y2="842.6" stroke="#e6f7fb" stroke-width="2"/>
<line x1="1297.75" y1="590" x2="1297.75" y2="842.6" stroke="#e6f7fb" stroke-width="2"/>
<line x1="1312.2" y1="590" x2="1312.2" y2="842.6" stroke="#e6f7fb" stroke-width="2"/>
<line x1="1333.4" y1="590" x2="1333.4" y2="842.6" stroke="#e6f7fb" stroke-width="2"/>
<line x1="1354" y1="590" x2="1354" y2="842.6" stroke="#e6f7fb" stroke-width="2"/>
<line x1="1382.1" y1="590" x2="1382.1" y2="842.6" stroke="#e6f7fb" stroke-width="2"/>
<line x1="1414.4" y1="590" x2="1414.4" y2="842.6" stroke="#e6f7fb" stroke-width="2"/>
<line x1="1453.1" y1="590" x2="1453.1" y2="842.6" stroke="#e6f7fb" stroke-width="2"/>
<line x1="1474" y1="590" x2="1474" y2="842.6" stroke="#e6f7fb" stroke-width="2"/>
<line x1="1497.25" y1="590" x2="1497.25" y2="842.6" stroke="#e6f7fb" stroke-width="2"/>
<line x1="1514" y1="590" x2="1514" y2="842.6" stroke="#e6f7fb" stroke-width="2"/>
<line x1="1537.75" y1="590" x2="1537.75" y2="842.6" stroke="#e6f7fb" stroke-width="2"/>
<line x1="1560.6" y1="590" x2="1560.6" y2="842.6" stroke="#e6f7fb" stroke-width="2"/>
</g>
<rect x="800" y="745" width="7.5" height="98" fill="#f7fbfc"/>
<polyline points="793.4,842 793.4,740.6 818,740.6" fill="none" stroke="#e6bb6a" stroke-width="1.5"/>
<line x1="818" y1="740.6" x2="818" y2="842" stroke="#f4fbfc" stroke-width="1.5"/>
<polyline points="1256.5,842 1256.5,637.5 1274.5,637.5 1274.5,650" fill="none" stroke="#e6bb6a" stroke-width="1.5"/>
<line x1="923.4" y1="730" x2="923.4" y2="842" stroke="#2f6378" stroke-width="1.6"/>
<line x1="549.5" y1="843" x2="549.5" y2="849" stroke="#cfcfcf" stroke-width="1"/>
<line x1="630.6" y1="843" x2="630.6" y2="849" stroke="#cfcfcf" stroke-width="1"/>
<line x1="689" y1="843" x2="689" y2="849" stroke="#cfcfcf" stroke-width="1"/>
<line x1="744.8" y1="843" x2="744.8" y2="849" stroke="#cfcfcf" stroke-width="1"/>
<line x1="801.5" y1="843" x2="801.5" y2="849" stroke="#cfcfcf" stroke-width="1"/>
<line x1="861" y1="843" x2="861" y2="849" stroke="#cfcfcf" stroke-width="1"/>
<line x1="919.4" y1="843" x2="919.4" y2="849" stroke="#cfcfcf" stroke-width="1"/>
<line x1="976.8" y1="843" x2="976.8" y2="849" stroke="#cfcfcf" stroke-width="1"/>
<line x1="1036.3" y1="843" x2="1036.3" y2="849" stroke="#cfcfcf" stroke-width="1"/>
<line x1="1092.9" y1="843" x2="1092.9" y2="849" stroke="#cfcfcf" stroke-width="1"/>
<line x1="1152.8" y1="843" x2="1152.8" y2="849" stroke="#cfcfcf" stroke-width="1"/>
<line x1="1211" y1="843" x2="1211" y2="849" stroke="#cfcfcf" stroke-width="1"/>
<line x1="1269.2" y1="843" x2="1269.2" y2="849" stroke="#cfcfcf" stroke-width="1"/>
<line x1="1325.6" y1="843" x2="1325.6" y2="849" stroke="#cfcfcf" stroke-width="1"/>
<line x1="1383.8" y1="843" x2="1383.8" y2="849" stroke="#cfcfcf" stroke-width="1"/>
<line x1="1443.7" y1="843" x2="1443.7" y2="849" stroke="#cfcfcf" stroke-width="1"/>
<line x1="1502.6" y1="843" x2="1502.6" y2="849" stroke="#cfcfcf" stroke-width="1"/>
<line x1="1561.9" y1="843" x2="1561.9" y2="849" stroke="#cfcfcf" stroke-width="1"/>
<circle cx="1296" cy="239" r="4.5" fill="#f9d5de"/>
<circle cx="1306" cy="243" r="5" fill="#fae0d6"/>
<circle cx="1343" cy="236" r="3" fill="#f8e4df"/>
<circle cx="1399" cy="205" r="4" fill="#e1edf7"/>
<circle cx="1536" cy="232" r="4.5" fill="#dde9f6"/>
<circle cx="960" cy="359" r="4.5" fill="#f9dde4"/>
<circle cx="882" cy="386" r="1.5" fill="#f3d3b8"/>
<circle cx="948" cy="372" r="1.2" fill="#e8d0d8"/>
<circle cx="880" cy="265" r="1.5" fill="#d8d8e0"/>
<circle cx="1061" cy="293" r="1.2" fill="#d8dde0"/>
</svg>

<!-- legend chart1 -->
<div class="leg" style="left:520.5px;top:156.5px">Sysented Pesenticure <span style="color:#9a9a9a">:47</span></div>
<div class="a" style="left:710.5px;top:159px;width:11px;height:11px;background:#dbeaf4;border:1px solid #b9d3e4"></div>
<div class="leg" style="left:727.5px;top:156.5px">Werchaset Month, &nbsp;28</div>
<div class="a" style="left:899px;top:159px;width:11px;height:11px;background:#ef8f76"></div>
<div class="leg" style="left:916px;top:156.5px">Resbult, &nbsp;1Z</div>
<div class="a" style="left:1014.5px;top:159px;width:11px;height:11px;background:#3a9a5c"></div>
<div class="leg" style="left:1032px;top:156.5px;color:#666">Aronticurleytit Ueoans Fronntiuol, &nbsp;27</div>
<div class="a" style="left:529px;top:178px;font-size:11px;color:#9a9a9a;font-style:italic;font-family:'Liberation Serif',serif">pom</div>
<div class="yl" style="left:512px;top:207.5px">62%</div>
<div class="yl" style="left:512px;top:245.5px">05%</div>
<div class="yl" style="left:512px;top:284px">15%</div>
<div class="yl" style="left:512px;top:324px">10%</div>
<div class="yl" style="left:512px;top:363.5px">20%</div>
<div class="yl" style="left:512px;top:411.5px">10%</div>
<div class="yl" style="left:512px;top:447.5px">0</div>
<div class="xl" style="left:511.0px;top:463px">1237</div>
<div class="xl" style="left:569.6px;top:463px">1554</div>
<div class="xl" style="left:628.2px;top:463px">1528</div>
<div class="xl" style="left:686.9px;top:463px">1427</div>
<div class="xl" style="left:745.5px;top:463px">1992</div>
<div class="xl" style="left:804.1px;top:463px">1008</div>
<div class="xl" style="left:862.7px;top:463px">1081</div>
<div class="xl" style="left:921.3px;top:463px">1140</div>
<div class="xl" style="left:980.0px;top:463px">1034</div>
<div class="xl" style="left:1038.6px;top:463px">1197</div>
<div class="xl" style="left:1097.2px;top:463px">2132</div>
<div class="xl" style="left:1155.8px;top:463px">2089</div>
<div class="xl" style="left:1214.4px;top:463px">1990</div>
<div class="xl" style="left:1273.1px;top:463px">1026</div>
<div class="xl" style="left:1331.7px;top:463px">1821</div>
<div class="xl" style="left:1390.3px;top:463px">1052</div>
<div class="xl" style="left:1448.9px;top:463px">1838</div>
<div class="xl" style="left:1507.5px;top:463px">1526</div>

<!-- tooltip big -->
<div class="a" style="left:1023px;top:182px;width:268.5px;height:70px;background:#f1f1f1;border-radius:5px;box-shadow:0 1.5px 2px rgba(0,0,0,0.13)"></div>
<div class="a" style="left:1043.5px;top:196px;font-size:21px;color:#2a2a2a;letter-spacing:0.3px">Chá a <span style="-webkit-text-stroke:0.25px #1a1a1a;color:#1a1a1a">170%</span></div>
<div class="a" style="left:1244px;top:195px;font-size:13px;color:#333">16</div>
<div class="a" style="left:1044.5px;top:221.5px;font-size:14px;color:#151515;letter-spacing:0.75px;-webkit-text-stroke:0.2px #151515">juip tord ≥phants to \vemberi</div>
<div class="a" style="left:1249px;top:222px;font-size:12px;color:#444;font-style:italic">fo</div><div class="a" style="left:1259px;top:234px;font-size:8px;color:#666">ls</div>

<!-- tooltip small -->
<div class="a" style="left:587.5px;top:343px;width:244px;height:62px;background:#fff;border:1px solid #e2e2e2;border-radius:4px;box-shadow:0 1px 3px rgba(0,0,0,0.08)"></div>
<svg class="a" style="left:600px;top:400px" width="50" height="25" viewBox="600 400 50 25"><path d="M613.5,405 L613.5,415.5 L621,419 L639.5,405.5" fill="#fff" stroke="#dedede" stroke-width="1"/><rect x="612" y="401" width="30" height="4.5" fill="#fff"/></svg>
<div class="a" style="left:593.5px;top:358px;width:10px;height:2px;background:#e8894e"></div>
<div class="a" style="left:608.5px;top:351px;font-size:12.5px;color:#1e1e1e;line-height:16.5px;letter-spacing:0.6px">Brenet that ure ted rnt\d peraauves<br>perioreaqly wiln demords<br>pollifon neve dolter ther.</div>

<!-- legend chart2 -->
<div class="leg" style="left:520.5px;top:536px">Demand Pogantier in <span style="color:#3a7ea0">4ℓ hót, 33</span></div>
<div class="a" style="left:749.5px;top:538px;width:12px;height:12px;border:1.5px solid #e9957a;border-radius:2px"></div>
<div class="leg" style="left:768px;top:536px">Wind Turbinte – Bwrerral Bmker</div>
<div class="leg" style="left:520.5px;top:566px">Hunchand, 25</div>
<div class="a" style="left:637px;top:567px;width:11px;height:11px;border:2px solid #3a86b8;border-radius:2px"></div>
<div class="leg" style="left:654.5px;top:566px">Viow Emenperd</div>
<div class="a" style="left:778px;top:572px;width:9px;height:2px;background:#c9c08a"></div>
<div class="leg" style="left:792px;top:566px">Cimentity</div>
<div class="a" style="left:529px;top:586.5px;font-size:12px;color:#9a9a9a">V</div>
<div class="yl" style="left:500px;top:605px">60</div>
<div class="yl" style="left:500px;top:658px">20</div>
<div class="yl" style="left:500px;top:705.5px">50</div>
<div class="yl" style="left:500px;top:754px">20</div>
<div class="yl" style="left:500px;top:836px">0</div>
<div class="xl" style="left:506.0px;top:851px">1O5B&#8202;z 2</div>
<div class="xl" style="left:576.6px;top:851px">1.1Z41</div>
<div class="xl" style="left:635.0px;top:851px">1O6B-1</div>
<div class="xl" style="left:690.8px;top:851px">1482-2</div>
<div class="xl" style="left:747.5px;top:851px">1.18=1</div>
<div class="xl" style="left:807.0px;top:851px">1-312</div>
<div class="xl" style="left:865.4px;top:851px">1O8=1</div>
<div class="xl" style="left:922.8px;top:851px">V-70</div>
<div class="xl" style="left:982.3px;top:851px">1O9=-</div>
<div class="xl" style="left:1038.9px;top:851px">108=1</div>
<div class="xl" style="left:1098.8px;top:851px">1P2b5</div>
<div class="xl" style="left:1157.0px;top:851px">LO5y7</div>
<div class="xl" style="left:1215.2px;top:851px">1383-3</div>
<div class="xl" style="left:1271.6px;top:851px">10456</div>
<div class="xl" style="left:1329.8px;top:851px">C.7.72</div>
<div class="xl" style="left:1389.7px;top:851px">1023-3</div>
<div class="xl" style="left:1448.6px;top:851px">4098</div>
<div class="xl" style="left:1507.9px;top:851px">0-8U</div>
</body></html>
